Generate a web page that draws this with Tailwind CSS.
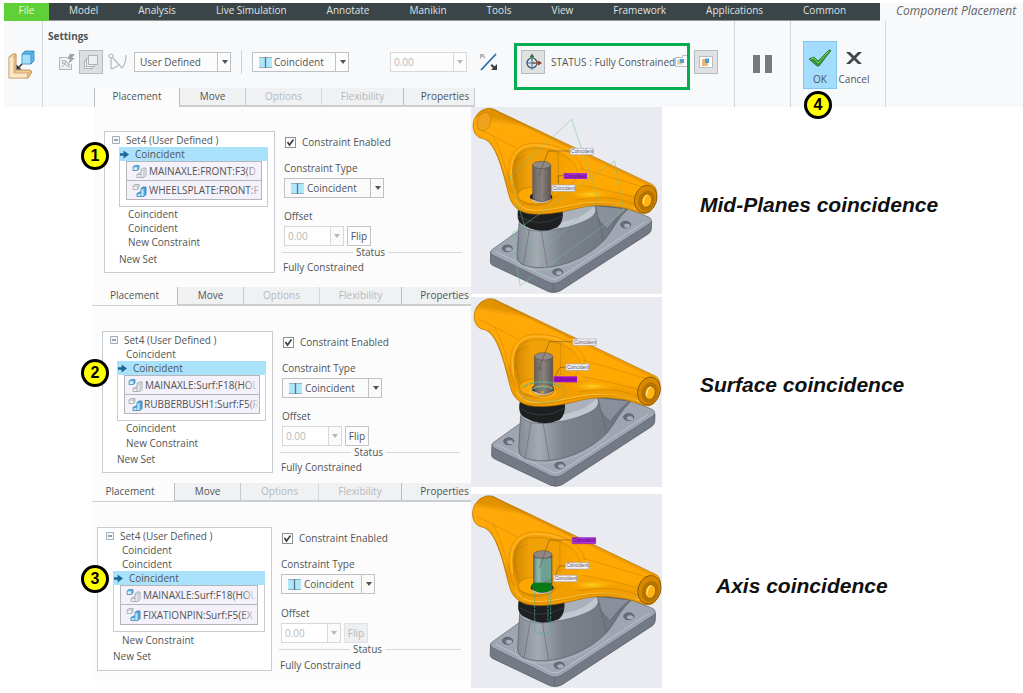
<!DOCTYPE html>
<html lang="en">
<head>
    <meta charset="UTF-8">
    <meta name="viewport" content="width=device-width, initial-scale=1.0">
    <title>Component Placement</title>
    <script src="https://cdn.jsdelivr.net/npm/@tailwindcss/browser@4"></script>
</head>
<body class="bg-white font-['Open_Sans','Noto_Sans',sans-serif] text-[10px] leading-[14px] text-[#505457] overflow-x-hidden">

    <!-- Shared icons and the truck model -->
    <svg class="absolute w-0 h-0" aria-hidden="true">
        <defs>
            <linearGradient id="tube" x1="0.55" y1="0.2" x2="0.4" y2="0.75">
                <stop offset="0" stop-color="#e29200"/>
                <stop offset="0.1" stop-color="#ffa90a"/>
                <stop offset="0.85" stop-color="#ffa800"/>
                <stop offset="1" stop-color="#f29d00"/>
            </linearGradient>
            <linearGradient id="pin" x1="0" x2="1">
                <stop offset="0" stop-color="#66605e"/>
                <stop offset="0.45" stop-color="#8d8683"/>
                <stop offset="1" stop-color="#5d5654"/>
            </linearGradient>
            <linearGradient id="pedestal" x1="0" x2="1">
                <stop offset="0" stop-color="#858b95"/>
                <stop offset="0.18" stop-color="#a4aab4"/>
                <stop offset="0.4" stop-color="#7d838d"/>
                <stop offset="1" stop-color="#6c727c"/>
            </linearGradient>
            <linearGradient id="pocket" x1="0" x2="1">
                <stop offset="0" stop-color="#d08700"/>
                <stop offset="0.25" stop-color="#f0a008"/>
                <stop offset="0.7" stop-color="#f4a000"/>
                <stop offset="1" stop-color="#ffa800"/>
            </linearGradient>
            <radialGradient id="glow">
                <stop offset="0" stop-color="#ffd21e"/>
                <stop offset="1" stop-color="#ffae00" stop-opacity="0"/>
            </radialGradient>
        </defs>

        <symbol id="mate" viewBox="0 0 14 12">
            <path fill="#aee6fb" d="M0 0h14v12H0z"/>
            <path fill="none" stroke="#8fa9b4" d="M0 .5h14M0 11.5h14"/>
            <path fill="none" stroke="#5b737d" stroke-width="1.400" d="M7 0v12"/>
        </symbol>
        <symbol id="caret" viewBox="0 0 6 4">
            <path fill="currentColor" d="M0 0h6L3 4z"/>
        </symbol>
        <symbol id="minus-box" viewBox="0 0 8 8">
            <path fill="#f4f8fb" stroke="#a3adb5" d="M.5.5h7v7h-7z"/>
            <path stroke="#37536b" d="M2 4h4"/>
        </symbol>
        <symbol id="arrow" viewBox="0 0 10 9">
            <path fill="#1b6796" d="M0 3h4V0l6 4.500L4 9V6H0z"/>
        </symbol>
        <symbol id="ref-a" viewBox="0 0 15 13">
            <path fill="#56b4ea" stroke="#3c7fa6" stroke-width=".7" d="M1 2l2-1.500h4V4L5.500 5.500H1z"/>
            <path fill="#d9edf8" d="M1.500 2.300h3.700v2.700H1.500z"/>
            <path fill="#eceef0" stroke="#9fa4a8" stroke-width=".8" d="M5 12.500V9.500l4-2V4.500L11 3h3v7.500l-2 2z"/>
            <path fill="none" stroke="#9fa4a8" stroke-width=".7" d="M9 5h3v7M12 5l2-2M5.500 9.500H9v3M9 7v3"/>
        </symbol>
        <symbol id="ref-b" viewBox="0 0 15 13">
            <path fill="#f1f2f3" stroke="#9fa4a8" stroke-width=".8" d="M1 2l2-1.500h4V4L5.500 5.500H1z"/>
            <path fill="none" stroke="#9fa4a8" stroke-width=".6" d="M1 2h4.500v3.500M5.500 2L7 .5"/>
            <path fill="#4ca9df" stroke="#2b7cab" stroke-width=".8" d="M5 12.500V9.500l4-2V4.500L11 3h3v7.500l-2 2z"/>
            <path fill="#bfe4f7" d="M9.300 5.200h2.300v7H9.300zM5.500 10H8.500v2.200h-3z"/>
        </symbol>

        <!-- Base plate, pedestal, bushing and yellow hanger -->
        <symbol id="truck" viewBox="0 0 590 570" overflow="visible">
            <path fill="#747a85" stroke="#4b5058" stroke-width="2" d="M62 440L61 472Q62 478 68 481L236 560Q252 566 270 558L536 386Q543 381 544 372L545 350L300 400z"/>
            <path fill="#9fa6b2" stroke="#5e646d" stroke-width="2" d="M66 434L145 378L460 305L536 336Q550 344 540 355L272 528Q254 540 234 531L68 450Q58 443 66 434z"/>
            <path fill="none" stroke="#c9ced7" stroke-width="2" d="M78 440L240 521Q254 526 266 519L526 350"/>
            <path stroke="#555b65" stroke-width="1.500" d="M250 538v22"/>
            <g fill="#6a707a" stroke="#474c54" stroke-width="2">
                <ellipse cx="112" cy="430" rx="15" ry="10"/>
                <ellipse cx="263" cy="501" rx="15" ry="10"/>
                <ellipse cx="467" cy="359" rx="15" ry="10"/>
            </g>
            <g fill="#a9afba">
                <ellipse cx="116" cy="433" rx="9" ry="6"/>
                <ellipse cx="267" cy="504" rx="9" ry="6"/>
                <ellipse cx="471" cy="362" rx="9" ry="6"/>
            </g>
            <path fill="url(#pedestal)" stroke="#555b65" stroke-width="2" d="M147 355L142 440Q136 470 160 480Q200 493 245 485C310 476 368 440 400 408C430 376 436 346 474 312L380 298z"/>
            <path fill="none" stroke="#b7bdc6" stroke-width="2" d="M138 450Q126 476 160 486Q200 500 248 491C320 480 380 440 408 410"/>
            <path fill="#abb1bc" stroke="#666c75" stroke-width="2" d="M147 355Q160 377 205 378C262 378 340 356 366 336Q382 322 376 302L270 300L150 340z"/>
            <path fill="#c3c8d0" d="M270 352C310 345 340 332 350 322L372 305L376 318Q370 334 346 345Q300 366 262 370z"/>
            <path fill="#8a909b" stroke="#555b65" stroke-width="1.500" d="M376 302L386 345L412 372C430 350 440 335 470 312z"/>
            <path fill="none" stroke="#575d66" stroke-width="1.500" d="M214 378L232 486M178 374L160 480M386 340L400 405"/>
            <path fill="#1d1f20" stroke="#0d0e0e" stroke-width="2" d="M145 316C142 340 146 350 156 357Q210 390 262 366Q280 352 277 316z"/>
            <path fill="none" stroke="#45484a" stroke-width="2" d="M147 334Q205 372 276 334"/>

            <path fill="url(#tube)" stroke="#a96d00" stroke-width="2" d="M45 12Q64 6 84 19L548 239C566 250 563 290 544 316Q530 332 503 322C450 300 380 298 340 306C290 318 240 330 190 327C152 325 132 308 121 284C108 245 98 185 76 140C62 112 48 101 31 99C8 90 4 58 16 36Q28 16 45 12z"/>
            <path fill="none" stroke="#e08d00" stroke-width="8" opacity=".5" d="M80 22L542 241"/>
            <ellipse cx="360" cy="268" rx="70" ry="15" fill="url(#glow)"/>
            <path fill="none" stroke="#ffcb45" stroke-width="3" opacity=".8" d="M500 312C440 288 370 288 325 297C270 309 225 318 190 316Q150 314 134 282"/>
            <path fill="none" stroke="#8e5c00" stroke-width="1.200" opacity=".6" d="M22 70L68 92L140 130M66 13L300 126M330 190L535 250M68 92C98 140 110 210 130 270M50 100C90 135 96 210 122 262M330 240C400 252 460 268 508 280M320 285C390 272 450 278 500 300M150 310L168 288M148 318C220 330 290 304 340 298S440 290 490 308"/>
            <path fill="url(#pocket)" d="M126 205C124 160 142 126 185 123C250 121 322 155 329 197C331 235 292 256 250 286Q205 312 160 295C138 275 129 240 126 205z"/>
            <path fill="none" stroke="#ffb62a" stroke-width="4" d="M126 235C115 160 140 127 185 121Q240 119 285 142"/>
            <path fill="none" stroke="#8e5c00" stroke-width="1.200" opacity=".6" d="M118 225C108 155 135 120 185 115C262 112 332 150 338 197M134 220C130 165 147 135 185 131C245 127 315 158 322 197C326 232 290 252 252 280M168 150L132 170M134 200C140 245 146 260 154 272M265 140V235"/>
            <ellipse cx="197" cy="276" rx="54" ry="28" fill="#dc9000"/>
            <ellipse cx="197" cy="271" rx="54" ry="26" fill="#ffa800" stroke="#9b6500" stroke-width="1.200"/>
            <ellipse cx="213" cy="276" rx="34" ry="15" fill="#261f17"/>
            <path fill="#c9c6be" d="M180 280Q190 296 216 294Q240 292 245 280L236 284H190z"/>

            <ellipse cx="527" cy="282" rx="33" ry="42" transform="rotate(18 527 282)" fill="#d98900" stroke="#704900" stroke-width="2"/>
            <ellipse cx="530" cy="287" rx="25" ry="31" transform="rotate(18 530 287)" fill="#b87400"/>
            <ellipse cx="530" cy="287" rx="15" ry="20" transform="rotate(14 530 287)" fill="#ffb414" stroke="#7b4f00" stroke-width="1.500"/>
            <path fill="none" stroke="#fff0b0" stroke-width="3" d="M520 296Q520 276 532 270"/>
        </symbol>
        <symbol id="steel-pin" viewBox="0 0 590 570" overflow="visible">
            <path fill="url(#pin)" stroke="#4c4645" stroke-width="1.500" d="M188 180V282Q214 298 242 282V180z"/>
            <ellipse cx="215" cy="180" rx="27" ry="11" fill="#8f8885" stroke="#504a48" stroke-width="1.500"/>
            <path stroke="#4a4443" d="M210 190V288"/>
        </symbol>
    </svg>

    <!-- Ribbon -->
    <header class="pt-[3px] pl-1">
        <nav class="flex h-[18px] bg-[#f8f9fb]">
            <a href="#" class="w-[45px] bg-[#5fd038] text-[#e2f7da] text-center leading-[15px]">File</a>
            <div class="flex bg-[#3b4547] text-[#dfe2e3] leading-[15px] border-b border-[#8d9496] pr-[14px]">
                <a href="#" class="px-5">Model</a>
                <a href="#" class="px-5">Analysis</a>
                <a href="#" class="px-5">Live Simulation</a>
                <a href="#" class="px-5">Annotate</a>
                <a href="#" class="px-5">Manikin</a>
                <a href="#" class="px-5">Tools</a>
                <a href="#" class="px-5">View</a>
                <a href="#" class="px-5">Framework</a>
                <a href="#" class="px-5">Applications</a>
                <a href="#" class="px-5">Common</a>
            </div>
            <a href="#" class="flex-1 pl-4 text-[12px] leading-[16px] italic text-[#5f6366] whitespace-nowrap">Component Placement</a>
        </nav>

        <div class="flex h-[86px] bg-[#f8f9fb]">
            <div class="w-[39px] pt-[29px] pl-1 border-r border-[#d3d6da]">
                <svg class="w-7 h-8" viewBox="0 0 28 32" role="img" aria-label="Assemble">
                    <path fill="#f5cf94" stroke="#b98f57" d="M1 7l4-3h3v16h14l2 2-4 6H1z"/>
                    <path fill="#fde8c5" d="M1.500 7.500H6V23h13v4.500H1.500z"/>
                    <path fill="none" stroke="#c79c62" stroke-width=".8" d="M6 7v16h14M6 7l2-3M20 23l4-2M20 23l-1 5M6 23l2-3"/>
                    <path fill="#5db7e9" stroke="#2f86b8" stroke-width=".8" d="M14 4l3-3h9v10l-3 3h-9z"/>
                    <path fill="#a5dcf8" d="M14.500 4.500h8v9h-8z"/>
                    <path fill="none" stroke="#2f86b8" stroke-width=".6" d="M23 14V4h-9M23 4l3-3"/>
                    <path stroke="#333" stroke-width="1.500" d="M14 14l-4 4"/>
                    <path fill="#333" d="M8.500 14.500v5h5z"/>
                </svg>
            </div>

            <div class="w-[692px] pt-2 pl-[5px] border-r border-[#d3d6da]">
                <h2 class="font-bold">Settings</h2>
                <div class="flex items-center h-6 mt-[7px]">
                    <button aria-label="Interface" class="ml-[10px]">
                        <svg class="w-[18px] h-[18px]" viewBox="0 0 18 18" fill="none" stroke="#b4b7ba">
                            <path fill="#eceeef" d="M1.500 4.500H9M1.500 4.500v12h12V11"/>
                            <path d="M4.500 7.500h3v3h-3zM4 14l3-3 2 2 2-2v4M8 8l3 4"/>
                            <path fill="#a1a4a7" stroke="none" d="M12 1h5l-3 4h3l-7 6 2-5H9z"/>
                        </svg>
                    </button>
                    <button aria-label="Manual placement" class="flex items-center justify-center w-6 h-6 ml-[3px] bg-[#dcdee0] border border-[#b8bbbe]">
                        <svg class="w-4 h-4" viewBox="0 0 16 16" fill="#eceeef" stroke="#b0b3b6">
                            <path d="M1.500 6.500h8v8h-8z"/>
                            <path d="M3.500 4.500h8v8h-8z"/>
                            <path d="M5.500 1.500h9v9h-9z"/>
                        </svg>
                    </button>
                    <button aria-label="Mechanism" class="ml-[5px]">
                        <svg class="w-5 h-5" viewBox="0 0 20 20" fill="none" stroke="#b4b7ba" stroke-width="1.200">
                            <circle cx="3" cy="4" r="2"/>
                            <path d="M3 6v11M4.500 5.500L14 16Q18 12 18 3M3 17q5-1 8-5"/>
                        </svg>
                    </button>
                    <div class="relative ml-[6px] w-[97px]">
                        <select aria-label="Connection" class="appearance-none block w-full h-5 pl-[5px] border border-[#bfc2c5] bg-[#fcfcfd]">
                            <option>User Defined</option>
                        </select>
                        <span class="absolute right-0 top-0 flex items-center justify-center w-[14px] h-5 border-l border-[#bfc2c5] pointer-events-none"><svg class="w-[6px] h-1"><use href="#caret"/></svg></span>
                    </div>
                    <span class="ml-[10px] w-px h-6 bg-[#d0d3d6]"></span>
                    <div class="relative ml-[10px] w-[97px]">
                        <select aria-label="Constraint" class="appearance-none block w-full h-5 pl-[21px] border border-[#bfc2c5] bg-[#fcfcfd]">
                            <option>Coincident</option>
                        </select>
                        <svg class="absolute left-[7px] top-[5px] w-[13px] h-[11px] pointer-events-none"><use href="#mate"/></svg>
                        <span class="absolute right-0 top-0 flex items-center justify-center w-[14px] h-5 border-l border-[#bfc2c5] pointer-events-none"><svg class="w-[6px] h-1"><use href="#caret"/></svg></span>
                    </div>
                    <div class="flex ml-[41px] w-[77px] h-5 border border-[#d6d8da] bg-[#fcfcfd] text-[#b6b8ba]">
                        <input aria-label="Offset" value="0.00" disabled class="min-w-0 flex-1 pl-[3px]">
                        <button disabled aria-label="Offset values" class="flex items-center justify-center w-[13px] border-l border-[#d6d8da]"><svg class="w-[6px] h-1"><use href="#caret"/></svg></button>
                    </div>
                    <button aria-label="Change orientation" class="ml-3">
                        <svg class="w-5 h-5" viewBox="0 0 20 20">
                            <path stroke="#2a6ea6" stroke-width="1.800" d="M2 18L17 2"/>
                            <path fill="#b0b3b6" d="M1 2h5L4.500 3.500l2 2L5.500 6.500l-2-2L1 7z"/>
                            <path fill="#3b3f42" d="M18 18h-6l2-2-2.500-2.500 1.500-1.500 2.500 2.500L18 12z"/>
                        </svg>
                    </button>
                    <!-- Status, outlined -->
                    <div class="relative flex items-center ml-[22px]">
                        <button aria-label="Show dragger" class="flex items-center justify-center w-6 h-6 bg-[#dfe1e3] border border-[#b8bbbe]">
                            <svg class="w-[18px] h-[18px]" viewBox="0 0 18 18" fill="none">
                                <circle cx="8" cy="10" r="5" stroke="#3c4f66" stroke-width="1.200"/>
                                <path stroke="#3478b5" d="M8 5v12M2 10h9"/>
                                <path stroke="#8d4a2c" stroke-width="1.200" d="M8 10h7"/>
                                <path fill="#8d3d25" d="M14 7.500l4 2.500-4 2.500z"/>
                                <path stroke="#4c9c5c" d="M8 3v5"/>
                                <path fill="#2e6b45" d="M5.500 4.500L8 .5l2.500 4z"/>
                            </svg>
                        </button>
                        <p class="ml-[6px] whitespace-nowrap">STATUS : Fully Constrained</p>
                        <svg class="w-3 h-[14px]" viewBox="0 0 12 14" role="img" aria-label="Separate window">
                            <path fill="#fafbfc" stroke="#b9bcbf" d="M.5 2.500h7v-2h5v11H.5z"/>
                            <path fill="#f0c48c" d="M2.500 4.500h5v5h-5z"/>
                            <path fill="#4ba3d8" d="M5 4h4v4H5z"/>
                        </svg>
                        <span class="absolute -left-[7px] -top-[7px] w-[176px] h-[47px] border-3 border-[#05ad50] pointer-events-none"></span>
                    </div>
                    <button aria-label="Main window" class="flex items-center justify-center w-6 h-6 ml-[7px] bg-[#dfe1e3] border border-[#b8bbbe]">
                        <svg class="w-[14px] h-3" viewBox="0 0 14 12">
                            <path fill="#fff" stroke="#b9bcbf" d="M.5.5h13v11H.5z"/>
                            <path fill="#efb878" d="M3 3h6v7H3z"/>
                            <path fill="#4b9fdb" d="M6 2.500h4V7H6z"/>
                        </svg>
                    </button>
                </div>
            </div>

            <div class="w-14 pt-[34px] flex justify-center border-r border-[#d3d6da]">
                <button aria-label="Pause" class="flex gap-[5px] h-[18px]">
                    <span class="w-[7px] h-[18px] bg-[#77797b]"></span>
                    <span class="w-[7px] h-[18px] bg-[#77797b]"></span>
                </button>
            </div>

            <div class="relative w-[95px] pt-5 pl-3 flex items-start border-r border-[#d3d6da]">
                <button class="flex flex-col items-center w-[34px] h-12 pt-[7px] bg-[#a3dcfc] border border-[#7fc8f0]">
                    <svg class="w-6 h-[18px]" viewBox="0 0 24 18">
                        <path fill="#2f9a3a" stroke="#246b35" stroke-width=".8" d="M1 10l5-2 4 4L21 1l2 .5L11 17H9z"/>
                        <path fill="none" stroke="#8ed04d" d="M3 10l3-1 4 5L21 2"/>
                    </svg>
                    <span class="mt-[5px]">OK</span>
                </button>
                <button class="flex flex-col items-center w-[34px] h-12 pt-2">
                    <svg class="w-[18px] h-[18px]" viewBox="0 0 18 18">
                        <path fill="#45484b" d="M1 3h4l4 4 4-4h4l-6 6 6 6h-4l-4-4-4 4H1l6-6z"/>
                    </svg>
                    <span class="mt-[5px]">Cancel</span>
                </button>
                <span class="absolute left-[13px] top-[70px] flex items-center justify-center w-7 h-7 rounded-full border-3 border-black bg-[#ffff00] text-black text-[16px] font-bold font-['Liberation_Sans',sans-serif]">4</span>
            </div>
            <div class="flex-1"></div>
        </div>
    </header>

    <main class="flex items-start pl-[92px]">
        <!-- Placement dashboards -->
        <div class="relative w-[379px] shrink-0 -mt-[19px]">

            <!-- Step 1 -->
            <section class="relative h-[199px] ml-[2px] bg-[#fcfcfc]">
                <nav class="flex w-[381px] h-[19px] leading-[17px] bg-[#eff1f3] border-b-2 border-[#cbcfd1]">
                    <button class="w-[86px] h-[19px] pb-[2px] bg-[#fcfcfc] border-x border-[#b9bdc0]">Placement</button>
                    <button class="w-[66px] border-r border-[#c6cacd]">Move</button>
                    <button disabled class="w-[76px] border-r border-[#d5d8da] text-[#b5b9bb]">Options</button>
                    <button disabled class="w-[82px] border-r border-[#b9bdc0] text-[#b5b9bb]">Flexibility</button>
                    <button class="flex-1 pl-3 border-r border-[#c6cacd]">Properties</button>
                </nav>
                <div class="flex pt-6 pl-[10px]">
                    <div class="w-[171px] h-[142px] pt-px border border-[#c9cccf] bg-white">
                        <p class="flex items-center gap-[6px] pl-[7px]"><svg class="w-2 h-2"><use href="#minus-box"/></svg>Set4 (User Defined )</p>
                        <div class="ml-[14px] mr-[6px] h-[60px] border border-[#c9cccf]">
                            <p class="flex items-center gap-[6px] -mx-px -mt-px pl-px h-[14px] bg-[#abe2fb]"><svg class="w-[9px] h-[9px]"><use href="#arrow"/></svg>Coincident</p>
                            <ul class="mx-[6px] w-[136px] bg-[#f4f1fa] border border-[#b5b5bc] leading-[18px] whitespace-nowrap">
                                <li class="relative flex items-center gap-[2px] h-[19px] pl-[5px] border-b border-[#b5b5bc]"><svg class="w-[15px] h-[13px] shrink-0"><use href="#ref-a"/></svg>MAINAXLE:FRONT:F3(D<span class="absolute right-0 inset-y-0 w-4 bg-linear-to-r from-transparent to-[#f4f1fa]"></span></li>
                                <li class="relative flex items-center gap-[2px] h-[18px] pl-[5px]"><svg class="w-[15px] h-[13px] shrink-0"><use href="#ref-b"/></svg>WHEELSPLATE:FRONT:F<span class="absolute right-0 inset-y-0 w-3 bg-linear-to-r from-transparent to-[#f4f1fa]"></span></li>
                            </ul>
                        </div>
                        <p class="pl-[23px]">Coincident</p>
                        <p class="pl-[23px]">Coincident</p>
                        <p class="pl-[23px]">New Constraint</p>
                        <p class="pl-[14px] mt-[3px]">New Set</p>
                    </div>
                    <form class="ml-[7px] w-[180px] pt-1">
                        <label class="flex items-center gap-[6px] h-[14px] pl-[3px]"><input type="checkbox" checked class="appearance-none w-[11px] h-[11px] border border-[#8d9194] bg-white"><svg class="absolute w-[11px] h-[11px]" viewBox="0 0 11 11"><path fill="none" stroke="#3a3d40" stroke-width="1.600" d="M2.500 5l2 3 4-5.500"/></svg>Constraint Enabled</label>
                        <label for="type1" class="block mt-3 pl-[2px]">Constraint Type</label>
                        <div class="relative mt-[3px] ml-[2px] w-[100px]">
                            <select id="type1" class="appearance-none block w-full h-5 pl-[22px] border border-[#bfc2c5] bg-[#fafafb]"><option>Coincident</option></select>
                            <svg class="absolute left-[7px] top-[5px] w-[13px] h-[11px] pointer-events-none"><use href="#mate"/></svg>
                            <span class="absolute right-0 top-0 flex items-center justify-center w-[14px] h-5 border-l border-[#bfc2c5] pointer-events-none"><svg class="w-[6px] h-1"><use href="#caret"/></svg></span>
                        </div>
                        <label for="offset1" class="block mt-[11px] pl-[2px]">Offset</label>
                        <div class="flex mt-[3px] ml-[2px] h-5">
                            <div class="flex w-[60px] border border-[#d6d8da] bg-white text-[#b6b8ba]">
                                <input id="offset1" value="0.00" disabled class="min-w-0 flex-1 pl-[3px]">
                                <button type="button" disabled aria-label="Offset values" class="flex items-center justify-center w-[13px] border-l border-[#d6d8da] bg-[#fafafb]"><svg class="w-[6px] h-1"><use href="#caret"/></svg></button>
                            </div>
                            <button type="button" class="ml-[3px] w-6 border border-[#c3c6c9]">Flip</button>
                        </div>
                        <p class="flex items-center gap-[3px] -mt-px h-[14px]"><span class="w-[71px] h-px bg-[#d6d6de]"></span>Status<span class="flex-1 h-px bg-[#d6d6de]"></span></p>
                        <p class="mt-px pl-px">Fully Constrained</p>
                    </form>
                </div>
                <span class="absolute -left-[13px] top-[54px] flex items-center justify-center w-7 h-7 rounded-full border-3 border-black bg-[#ffff00] text-black text-[16px] font-bold font-['Liberation_Sans',sans-serif]">1</span>
            </section>

            <!-- Step 2 -->
            <section class="relative h-[196px] bg-[#fcfcfc]">
                <nav class="flex h-[19px] leading-[17px] bg-[#eff1f3] border-b-2 border-[#cbcfd1]">
                    <button class="w-[86px] h-[18px] pb-px bg-[#fcfcfc] border-r border-[#b9bdc0]">Placement</button>
                    <button class="w-[66px] border-r border-[#c6cacd]">Move</button>
                    <button disabled class="w-[76px] border-r border-[#d5d8da] text-[#b5b9bb]">Options</button>
                    <button disabled class="w-[82px] border-r border-[#b9bdc0] text-[#b5b9bb]">Flexibility</button>
                    <button class="flex-1 pl-4">Properties</button>
                </nav>
                <div class="flex pt-[25px] pl-[10px]">
                    <div class="w-[171px] h-[142px] pt-px border border-[#c9cccf] bg-white">
                        <p class="flex items-center gap-[6px] pl-[7px]"><svg class="w-2 h-2"><use href="#minus-box"/></svg>Set4 (User Defined )</p>
                        <p class="pl-[23px]">Coincident</p>
                        <div class="ml-[14px] mr-[6px] h-[60px] border border-[#c9cccf]">
                            <p class="flex items-center gap-[6px] -mx-px -mt-px pl-px h-[14px] bg-[#abe2fb]"><svg class="w-[9px] h-[9px]"><use href="#arrow"/></svg>Coincident</p>
                            <ul class="mx-[6px] w-[136px] bg-[#f4f1fa] border border-[#b5b5bc] leading-[18px] whitespace-nowrap">
                                <li class="relative flex items-center gap-[2px] h-[19px] pl-[3px] border-b border-[#b5b5bc]"><svg class="w-[15px] h-[13px] shrink-0"><use href="#ref-a"/></svg>MAINAXLE:Surf:F18(HOL<span class="absolute right-0 inset-y-0 w-4 bg-linear-to-r from-transparent to-[#f4f1fa]"></span></li>
                                <li class="relative flex items-center gap-px h-[18px] pl-[3px]"><svg class="w-[15px] h-[13px] shrink-0"><use href="#ref-b"/></svg>RUBBERBUSH1:Surf:F5(R<span class="absolute right-0 inset-y-0 w-3 bg-linear-to-r from-transparent to-[#f4f1fa]"></span></li>
                            </ul>
                        </div>
                        <p class="pl-[23px]">Coincident</p>
                        <p class="pl-[23px] mt-px">New Constraint</p>
                        <p class="pl-[14px] mt-[2px]">New Set</p>
                    </div>
                    <form class="ml-[7px] w-[180px] pt-1">
                        <label class="flex items-center gap-[6px] h-[14px] pl-[3px]"><input type="checkbox" checked class="appearance-none w-[11px] h-[11px] border border-[#8d9194] bg-white"><svg class="absolute w-[11px] h-[11px]" viewBox="0 0 11 11"><path fill="none" stroke="#3a3d40" stroke-width="1.600" d="M2.500 5l2 3 4-5.500"/></svg>Constraint Enabled</label>
                        <label for="type2" class="block mt-3 pl-[2px]">Constraint Type</label>
                        <div class="relative mt-[3px] ml-[2px] w-[100px]">
                            <select id="type2" class="appearance-none block w-full h-5 pl-[22px] border border-[#bfc2c5] bg-[#fafafb]"><option>Coincident</option></select>
                            <svg class="absolute left-[7px] top-[5px] w-[13px] h-[11px] pointer-events-none"><use href="#mate"/></svg>
                            <span class="absolute right-0 top-0 flex items-center justify-center w-[14px] h-5 border-l border-[#bfc2c5] pointer-events-none"><svg class="w-[6px] h-1"><use href="#caret"/></svg></span>
                        </div>
                        <label for="offset2" class="block mt-[11px] pl-[2px]">Offset</label>
                        <div class="flex mt-[3px] ml-[2px] h-5">
                            <div class="flex w-[60px] border border-[#d6d8da] bg-white text-[#b6b8ba]">
                                <input id="offset2" value="0.00" disabled class="min-w-0 flex-1 pl-[3px]">
                                <button type="button" disabled aria-label="Offset values" class="flex items-center justify-center w-[13px] border-l border-[#d6d8da] bg-[#fafafb]"><svg class="w-[6px] h-1"><use href="#caret"/></svg></button>
                            </div>
                            <button type="button" class="ml-[3px] w-6 border border-[#c3c6c9]">Flip</button>
                        </div>
                        <p class="flex items-center gap-[3px] -mt-px h-[14px]"><span class="w-[71px] h-px bg-[#d6d6de]"></span>Status<span class="flex-1 h-px bg-[#d6d6de]"></span></p>
                        <p class="mt-px pl-px">Fully Constrained</p>
                    </form>
                </div>
                <span class="absolute -left-[11px] top-[72px] flex items-center justify-center w-7 h-7 rounded-full border-3 border-black bg-[#ffff00] text-black text-[16px] font-bold font-['Liberation_Sans',sans-serif]">2</span>
            </section>

            <!-- Step 3 -->
            <section class="relative h-[198px] bg-[#fcfcfc]">
                <nav class="flex h-[19px] leading-[17px] bg-[#eff1f3] border-b-2 border-[#cbcfd1]">
                    <button class="w-[83px] h-[18px] pb-px pr-[6px] bg-[#fcfcfc] border-r border-[#b9bdc0]">Placement</button>
                    <button class="w-[66px] border-r border-[#c6cacd]">Move</button>
                    <button disabled class="w-[78px] border-r border-[#d5d8da] text-[#b5b9bb]">Options</button>
                    <button disabled class="w-[83px] border-r border-[#b9bdc0] text-[#b5b9bb]">Flexibility</button>
                    <button class="flex-1 pl-4">Properties</button>
                </nav>
                <div class="flex pt-[25px] pl-[5px]">
                    <div class="w-[175px] h-[144px] pt-px border border-[#c9cccf] bg-white">
                        <p class="flex items-center gap-[6px] pl-2"><svg class="w-2 h-2"><use href="#minus-box"/></svg>Set4 (User Defined )</p>
                        <p class="pl-6">Coincident</p>
                        <p class="pl-6">Coincident</p>
                        <div class="ml-[15px] mr-[6px] h-[61px] border border-[#c9cccf]">
                            <p class="flex items-center gap-[6px] -mx-px -mt-px pl-px h-[14px] bg-[#abe2fb]"><svg class="w-[9px] h-[9px]"><use href="#arrow"/></svg>Coincident</p>
                            <ul class="mx-[6px] w-[138px] bg-[#f4f1fa] border border-[#b5b5bc] leading-[18px] whitespace-nowrap">
                                <li class="relative flex items-center gap-[2px] h-[19px] pl-[5px] border-b border-[#b5b5bc]"><svg class="w-[15px] h-[13px] shrink-0"><use href="#ref-a"/></svg>MAINAXLE:Surf:F18(HOL<span class="absolute right-0 inset-y-0 w-4 bg-linear-to-r from-transparent to-[#f4f1fa]"></span></li>
                                <li class="relative flex items-center gap-[2px] h-[19px] pl-[5px]"><svg class="w-[15px] h-[13px] shrink-0"><use href="#ref-b"/></svg>FIXATIONPIN:Surf:F5(EX<span class="absolute right-0 inset-y-0 w-4 bg-linear-to-r from-transparent to-[#f4f1fa]"></span></li>
                            </ul>
                        </div>
                        <p class="pl-6 mt-px">New Constraint</p>
                        <p class="pl-[15px] mt-[2px]">New Set</p>
                    </div>
                    <form class="ml-[7px] w-[182px] pt-1">
                        <label class="flex items-center gap-[6px] h-[14px] pl-[3px]"><input type="checkbox" checked class="appearance-none w-[11px] h-[11px] border border-[#8d9194] bg-white"><svg class="absolute w-[11px] h-[11px]" viewBox="0 0 11 11"><path fill="none" stroke="#3a3d40" stroke-width="1.600" d="M2.500 5l2 3 4-5.500"/></svg>Constraint Enabled</label>
                        <label for="type3" class="block mt-3 pl-[2px]">Constraint Type</label>
                        <div class="relative mt-[3px] ml-[2px] w-[94px]">
                            <select id="type3" class="appearance-none block w-full h-5 pl-[22px] border border-[#bfc2c5] bg-[#fafafb]"><option>Coincident</option></select>
                            <svg class="absolute left-[7px] top-[5px] w-[13px] h-[11px] pointer-events-none"><use href="#mate"/></svg>
                            <span class="absolute right-0 top-0 flex items-center justify-center w-[14px] h-5 border-l border-[#bfc2c5] pointer-events-none"><svg class="w-[6px] h-1"><use href="#caret"/></svg></span>
                        </div>
                        <label for="offset3" class="block mt-3 pl-[2px]">Offset</label>
                        <div class="flex mt-[3px] ml-[2px] h-5">
                            <div class="flex w-[60px] border border-[#d6d8da] bg-white text-[#b6b8ba]">
                                <input id="offset3" value="0.00" disabled class="min-w-0 flex-1 pl-[3px]">
                                <button type="button" disabled aria-label="Offset values" class="flex items-center justify-center w-[13px] border-l border-[#d6d8da] bg-[#fafafb]"><svg class="w-[6px] h-1"><use href="#caret"/></svg></button>
                            </div>
                            <button type="button" disabled class="ml-[3px] w-6 border border-[#e0e2e4] bg-[#eeeff0] text-[#b5b9bb]">Flip</button>
                        </div>
                        <p class="flex items-center gap-[3px] -mt-px h-[14px]"><span class="w-[71px] h-px bg-[#d6d6de]"></span>Status<span class="flex-1 h-px bg-[#d6d6de]"></span></p>
                        <p class="mt-[2px] pl-px">Fully Constrained</p>
                    </form>
                </div>
                <span class="absolute -left-[11px] top-[82px] flex items-center justify-center w-7 h-7 rounded-full border-3 border-black bg-[#ffff00] text-black text-[16px] font-bold font-['Liberation_Sans',sans-serif]">3</span>
            </section>
        </div>

        <!-- Model views -->
        <div class="w-[191px] shrink-0 font-['Liberation_Sans',sans-serif]">
            <svg class="block w-full h-[187px] bg-[#e9ebf0]" viewBox="3 6 573 561">
                <use href="#truck" width="590" height="570"/>
                <ellipse cx="42" cy="50" rx="20" ry="28" transform="rotate(18 42 50)" fill="#f0a21c" stroke="#c98500" stroke-width="2"/>
                <use href="#steel-pin" width="590" height="570"/>
                <path fill="none" stroke="#6cc487" stroke-width="1.500" d="M305 43L120 215L192 458L386 284zM434 168L126 385L150 542L462 318z"/>
                <path fill="none" stroke="#5c4a30" stroke-width="1.500" d="M205 215L235 138H302M265 235V212H282M218 275L240 250"/>
                <g font-size="14">
                    <path fill="#f3f1f6" stroke="#a9a9b8" stroke-width="2" d="M301 130h69v19h-69zM246 240h69v19h-69z"/>
                    <path fill="#a42bd2" d="M281 204h70v18h-70z"/>
                    <text x="304" y="144" fill="#55505e">Coincident</text>
                    <text x="249" y="254" fill="#55505e">Coincident</text>
                    <text x="284" y="218" fill="#4b0b66">Coincident</text>
                </g>
            </svg>
            <svg class="block w-full h-[190px] mt-[3px] bg-[#e9ebf0]" viewBox="3 15 573 570">
                <g transform="translate(3 10) scale(1.013 1.018)">
                    <use href="#truck" width="590" height="570"/>
                    <use href="#steel-pin" width="590" height="570"/>
                </g>
                <g fill="none" stroke-width="2">
                    <ellipse cx="218" cy="300" rx="68" ry="31" stroke="#8ba878"/>
                    <ellipse cx="218" cy="299" rx="38" ry="17" stroke="#ffcf60"/>
                    <path stroke="#35b89b" stroke-width="3" stroke-dasharray="12 5" d="M162 284Q215 255 268 284M186 292Q216 278 250 292"/>
                    <path stroke="#5c4a30" stroke-width="1.500" d="M205 235L238 149H308M255 253L270 226H287M210 225v12"/>
                </g>
                <circle cx="217" cy="301" r="4" fill="#e4a51c"/>
                <g font-size="14">
                    <path fill="#f3f1f6" stroke="#a9a9b8" stroke-width="2" d="M309 141h70v19h-70zM288 216h69v19h-69z"/>
                    <path fill="#a30fd6" d="M251 253h70v18h-70z"/>
                    <text x="312" y="155" fill="#55505e">Coincident</text>
                    <text x="291" y="230" fill="#55505e">Coincident</text>
                    <text x="254" y="267" fill="#4b0b66">Coincident</text>
                </g>
            </svg>
            <svg class="block w-full h-[194px] mt-[7px] bg-[#e9ebf0]" viewBox="3 12 573 582">
                <g transform="translate(-2 7) scale(1.025 1.036)">
                    <use href="#truck" width="590" height="570"/>
                    <use href="#steel-pin" width="590" height="570"/>
                </g>
                <path fill="#6fa193" d="M194 203Q218 210 244 203V278H194z"/>
                <path fill="#9cc4b8" opacity=".6" d="M200 206h12v72h-12z"/>
                <path fill="#087a16" d="M182 290Q188 276 196 278H242L246 300Q216 314 194 302z"/>
                <path fill="none" stroke="#48aca0" stroke-width="2" stroke-dasharray="10 3" d="M194 305V425Q218 440 242 425V305M234 305V400"/>
                <path fill="none" stroke="#5c4a30" stroke-width="1.500" d="M208 235L238 150H307M255 258L268 228H286M220 280L250 265"/>
                <g font-size="14">
                    <path fill="#b02fd8" stroke="#8c1fb5" stroke-width="2" d="M307 143h70v18h-70z"/>
                    <path fill="#f3f1f6" stroke="#a9a9b8" stroke-width="2" d="M286 218h70v19h-70zM251 256h69v19h-69z"/>
                    <text x="310" y="157" fill="#4b0b66">Coincident</text>
                    <text x="289" y="232" fill="#55505e">Coincident</text>
                    <text x="254" y="270" fill="#55505e">Coincident</text>
                </g>
            </svg>
        </div>

        <!-- Captions -->
        <div class="flex-1 pl-[38px] pt-[86px] font-['Liberation_Sans',sans-serif] text-[21px] leading-6 font-bold italic text-[#111] whitespace-nowrap">
            <h3>Mid-Planes coincidence</h3>
            <h3 class="mt-[156px]">Surface coincidence</h3>
            <h3 class="mt-[177px] pl-4">Axis coincidence</h3>
        </div>
    </main>
</body>
</html>
